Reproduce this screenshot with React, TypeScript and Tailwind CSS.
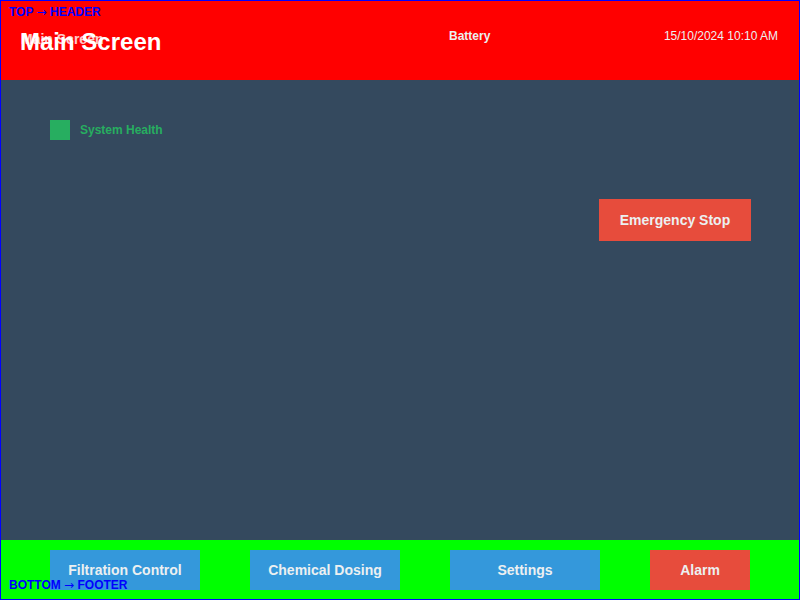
import React from 'react';

const font = { fontFamily: '"Liberation Sans", Arial, sans-serif' };

export default function App() {
  return (
    <div
      className="relative w-[800px] h-[600px] border border-[#0000ff] flex flex-col overflow-hidden"
      style={font}
    >
      {/* Header */}
      <header className="relative h-[79px] shrink-0 bg-[#ff0000] flex items-start pl-[19px] pr-[21px]">
        <div className="relative w-[429px] pt-[27px]">
          <span className="absolute left-[1px] top-[30px] text-[14px] font-bold leading-4 text-white/80">
            Main Screen
          </span>
          <h1 className="relative text-[24px] font-bold leading-7 text-white">Main Screen</h1>
        </div>
        <span className="pt-[27px] text-[12px] font-bold leading-4 text-[#ecf0f1]">Battery</span>
        <span className="ml-auto pt-[27px] text-[12px] leading-4 text-[#ecf0f1]">15/10/2024 10:10 AM</span>
        <span className="absolute left-[8px] top-[3px] text-[12px] font-bold leading-4 text-[#0000ff]">
          TOP <span className="font-['DejaVu_Sans'] font-normal">→</span> HEADER
        </span>
      </header>

      {/* Body */}
      <main className="flex-1 bg-[#34495e] flex flex-col pl-[49px] pr-[48px] pt-[40px]">
        <div className="flex items-center gap-[10px]">
          <div className="w-5 h-5 bg-[#27ae60]" />
          <span className="text-[12px] font-bold text-[#27ae60]">System Health</span>
        </div>
        <button className="self-end mt-[59px] w-[152px] h-[42px] bg-[#e74c3c] text-[14px] font-bold text-[#ecf0f1]">
          Emergency Stop
        </button>
      </main>

      {/* Footer */}
      <footer className="relative h-[59px] shrink-0 bg-[#00ff00] flex gap-[50px] pl-[49px] pt-[10px]">
        <button className="w-[150px] h-10 bg-[#3498db] text-[14px] font-bold text-[#ecf0f1]">Filtration Control</button>
        <button className="w-[150px] h-10 bg-[#3498db] text-[14px] font-bold text-[#ecf0f1]">Chemical Dosing</button>
        <button className="w-[150px] h-10 bg-[#3498db] text-[14px] font-bold text-[#ecf0f1]">Settings</button>
        <button className="w-[100px] h-10 bg-[#e74c3c] text-[14px] font-bold text-[#ecf0f1]">Alarm</button>
        <span className="absolute left-[8px] top-[37px] text-[12px] font-bold leading-4 text-[#0000ff]">
          BOTTOM <span className="font-['DejaVu_Sans'] font-normal">→</span> FOOTER
        </span>
      </footer>
    </div>
  );
}
